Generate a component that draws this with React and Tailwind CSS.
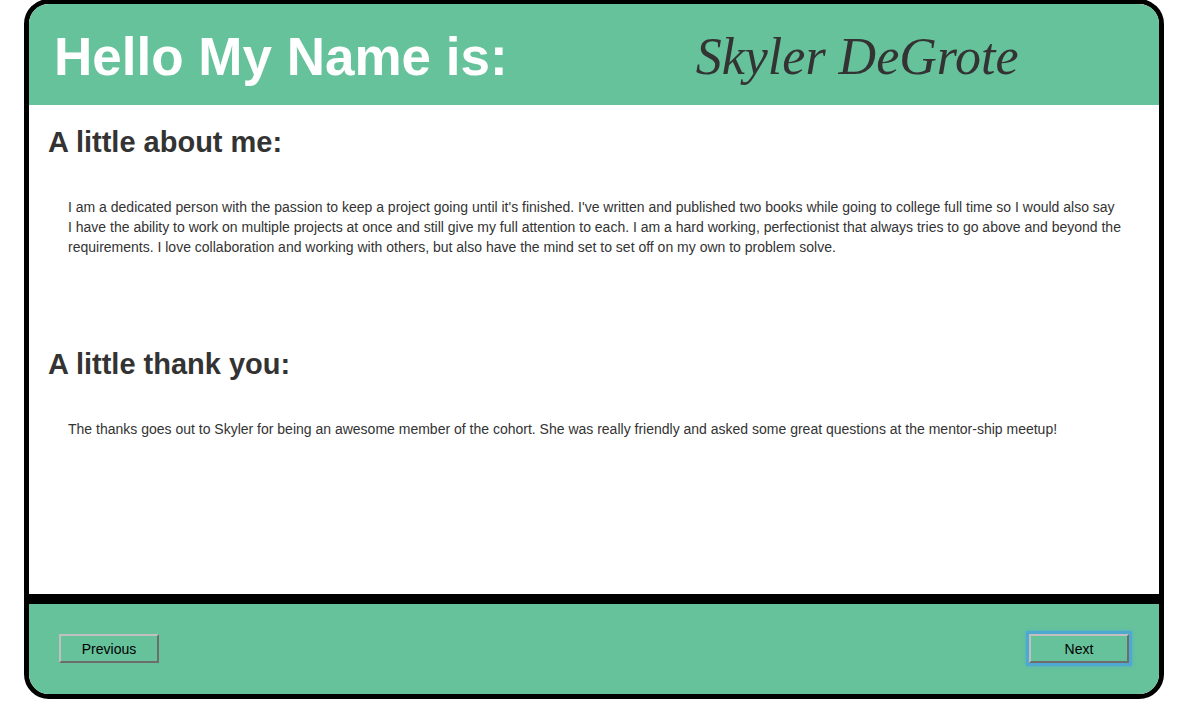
function Section({ title, children }) {
  return (
    <section>
      <h2 className="text-[29px] leading-8 font-bold text-[#333333]">{title}</h2>
      <p className="mt-[39px] px-5 text-sm leading-5 text-[#333333]">{children}</p>
    </section>
  );
}

function NavButton({ children, focused = false }) {
  return (
    <button
      type="button"
      className={
        "h-[29px] w-[100px] border-2 border-t-[#c0c0c0] border-l-[#c0c0c0] border-r-[#6d6d6d] border-b-[#6d6d6d] text-sm leading-5 text-black " +
        (focused ? "shadow-[0_0_0_3px_#4fa8d0,0_0_3px_3px_#4fa8d0]" : "")
      }
    >
      {children}
    </button>
  );
}

export default function App() {
  return (
    <div className="flow-root bg-white font-['Liberation_Sans',Arial,sans-serif]">
      <main className="-mt-px mr-7 ml-6 flex flex-col overflow-hidden rounded-[25px] border-5 border-black">
        <header className="grid h-[101px] grid-cols-[59%_1fr] bg-[#66c29b]">
          <h1 className="pt-[22px] pl-[25px] text-[53px] leading-[62px] font-bold whitespace-nowrap text-white">
            Hello My Name is:
          </h1>
          <p className="pt-[22px] font-['Liberation_Serif',cursive] text-[52px] leading-[62px] whitespace-nowrap text-[#333333] italic">
            Skyler DeGrote
          </p>
        </header>

        <div className="grid h-[489px] grid-rows-[222px_1fr] pt-[21px] pl-[19px]">
          <Section title="A little about me:">
            I am a dedicated person with the passion to keep a project going until it's finished. I've written and
            published two books while going to college full time so I would also say I&nbsp;have the ability to work on
            multiple projects at once and still give my full attention to each. I am a hard working, perfectionist that
            always tries to go above and beyond the requirements. I love collaboration and working with others, but also
            have the mind set to set off on my own to problem solve.
          </Section>
          <Section title="A little thank you:">
            The thanks goes out to Skyler for being an awesome member of the cohort. She was really friendly and asked
            some great questions at the mentor-ship meetup!
          </Section>
        </div>

        <footer className="h-[100px] border-t-10 border-black bg-[#66c29b]">
          <div className="flex justify-between px-[30px] pt-[30px]">
            <NavButton>Previous</NavButton>
            <NavButton focused>Next</NavButton>
          </div>
        </footer>
      </main>
    </div>
  );
}
